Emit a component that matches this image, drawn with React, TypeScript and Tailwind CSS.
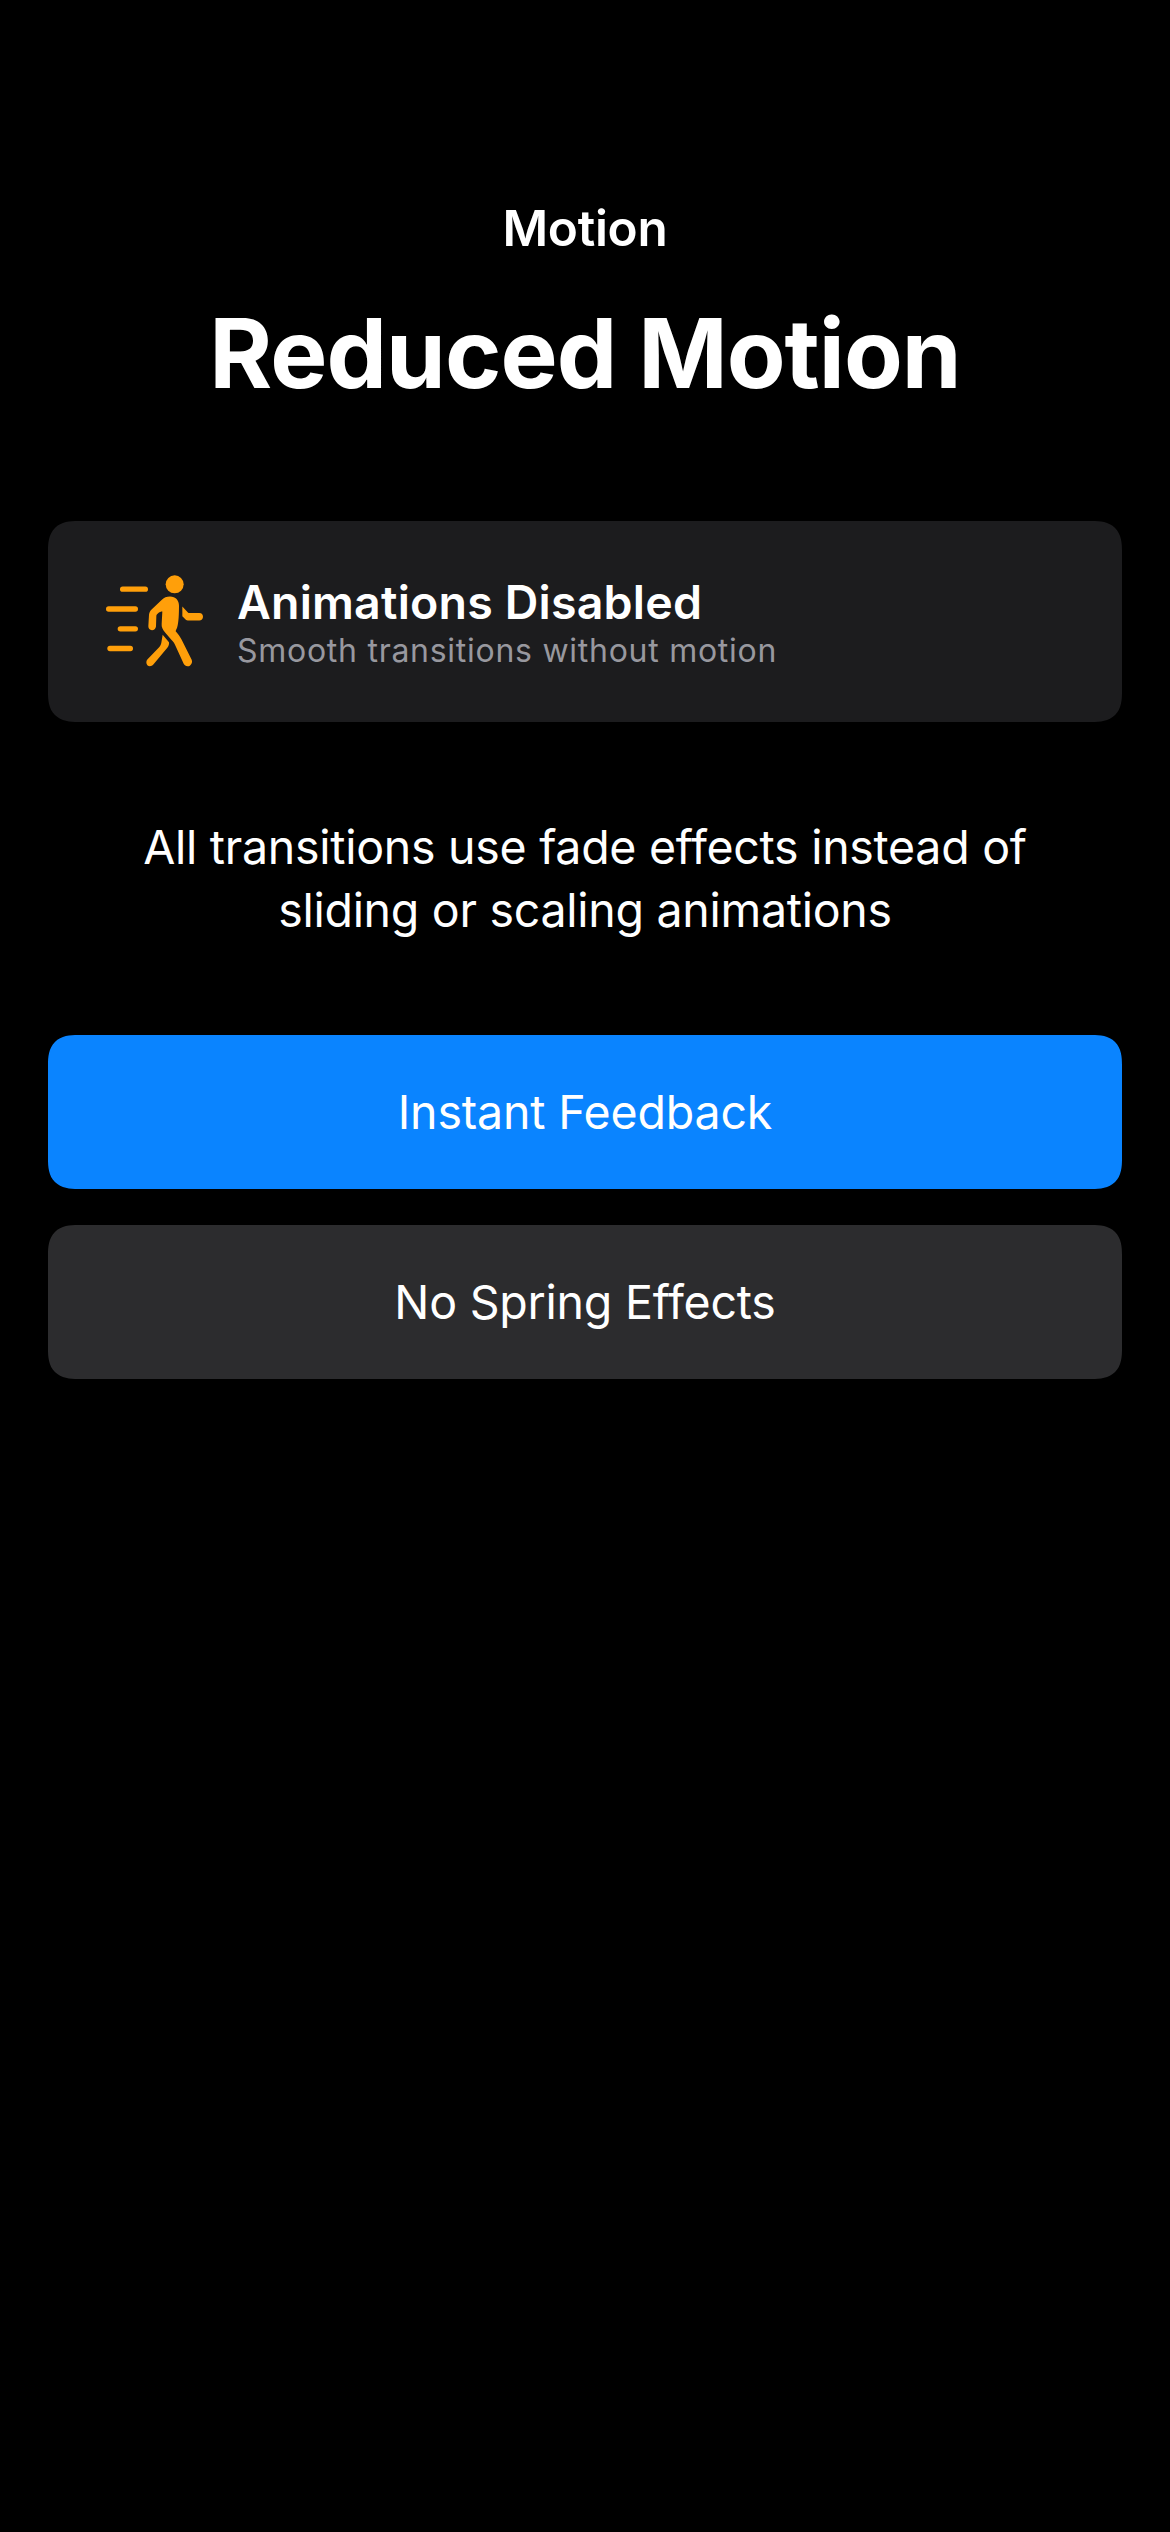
import React from "react";

function WalkingFigureIcon() {
  return (
    <svg
      className="mb-[2px] h-[92px] w-[97px] shrink-0 fill-[#ff9f0a]"
      viewBox="48 43.5 291 276"
      aria-hidden="true"
    >
      <g className="stroke-[#ff9f0a]" strokeWidth="16" strokeLinecap="round">
        <path d="M98 86H166" />
        <path d="M56 145.5H136" />
        <path d="M91 205H136" />
        <path d="M60 264H121" />
      </g>
      <circle cx="254" cy="71.5" r="27" />
      <path d="M240 108C257 108 267 119 267 136C267 160 266 186 262 199C261 204 258 208 257 212C264 220 270 228 275 238L305 298C308 306 304 314 297 317C290 319 284 316 281 310L256 255C253 248 249 243 244 238L226 217C218 208 214 200 215 190L217 153C212 153 209 155 206 157C201 161 199 163 199 168L198 198C197 205 192 209 186 209C179 208 175 203 175 197L177 163C178 156 180 152 184 148L214 119C222 111 230 108 240 108Z" />
      <path d="M218 223L237 245C238 250 236 257 232 262L190 312C185 318 177 319 172 314C168 309 168 302 172 297L206 262C211 257 213 252 214 247Z" />
      <path d="M277 138L293 155C295 157 297 157.500 300 157.500L328 157.500C335 157.500 339 162 339 169C339 176 334 180 328 180L296 180C292 180 289 179 286 176L277 167Z" />
    </svg>
  );
}

function ActionButton({ label, tone }: { label: string; tone: string }) {
  return (
    <button
      className={`flex h-[154px] w-full items-center justify-center rounded-[30px] text-[46.5px] leading-[56px] [corner-shape:superellipse(1.4)] ${tone}`}
    >
      {label}
    </button>
  );
}

export default function App() {
  return (
    <main className="flex min-h-[2532px] flex-col bg-black px-12 pt-[198px] font-['Inter',sans-serif] text-white">
      <header className="flex flex-col items-center gap-[37px]">
        <p className="text-[49.5px] leading-[60px] font-semibold tracking-[-0.27px]">Motion</p>
        <h1 className="text-[96px] leading-[116px] font-bold tracking-[-0.93px]">Reduced Motion</h1>
      </header>

      <section className="mt-[110px] flex h-[201px] items-center gap-[34px] rounded-[30px] bg-[#1c1c1e] pl-[58px] [corner-shape:superellipse(1.4)]">
        <WalkingFigureIcon />
        <div className="flex flex-col gap-px">
          <h2 className="text-[46.5px] leading-[56px] font-semibold tracking-[0.2px]">
            Animations Disabled
          </h2>
          <p className="text-[32px] leading-[39px] tracking-[0.73px] text-[#98989f]">
            Smooth transitions without motion
          </p>
        </div>
      </section>

      <p className="mt-[94px] text-center text-[46.5px] leading-[63px] tracking-[-0.28px]">
        All transitions use fade effects instead of
        <br />
        sliding or scaling animations
      </p>

      <div className="mt-[93px] flex flex-col gap-9">
        <ActionButton label="Instant Feedback" tone="bg-[#0a84ff] tracking-[-0.18px]" />
        <ActionButton label="No Spring Effects" tone="bg-[#2c2c2e] tracking-[-0.22px]" />
      </div>
    </main>
  );
}
